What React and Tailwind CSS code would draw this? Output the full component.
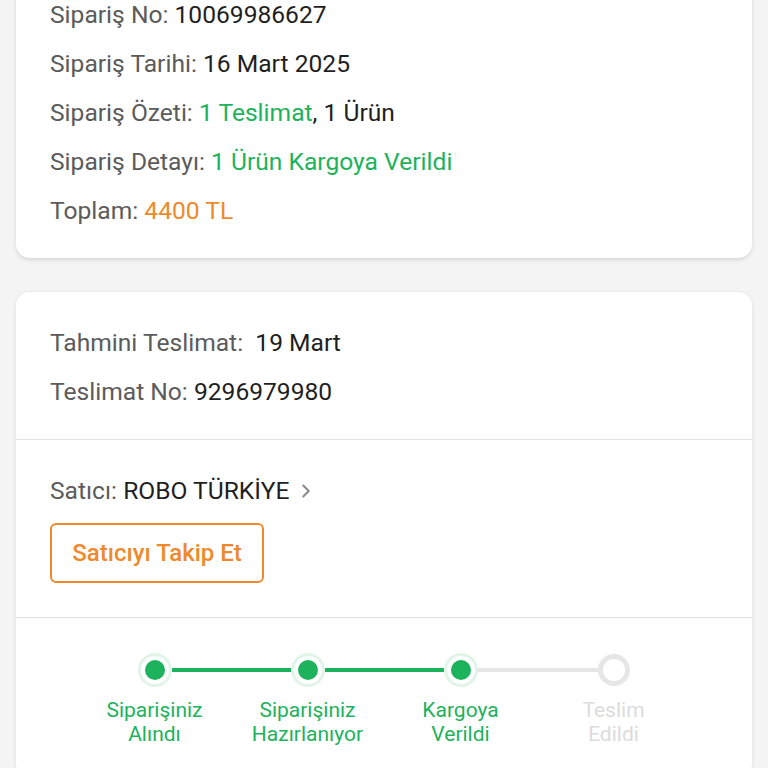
import { ChevronRight } from 'lucide-react'

const adimlar = [
  { ust: 'Siparişiniz', alt: 'Alındı', durum: 'tamam' },
  { ust: 'Siparişiniz', alt: 'Hazırlanıyor', durum: 'tamam' },
  { ust: 'Kargoya', alt: 'Verildi', durum: 'tamam' },
  { ust: 'Teslim', alt: 'Edildi', durum: 'bekliyor' },
]

function Satir({ etiket, children }) {
  return (
    <p className="leading-[49px] text-[24.6px] text-[#5b5b5b] whitespace-nowrap">
      {etiket} {children}
    </p>
  )
}

function Adim({ adim, index }) {
  const tamam = adim.durum === 'tamam'
  const solYesil = index > 0 && adimlar[index - 1].durum === 'tamam' && tamam
  const sagYesil = index < adimlar.length - 1 && adimlar[index + 1].durum === 'tamam'
  return (
    <div className="flex flex-col items-center">
      <div className="flex w-full items-center h-[34px]">
        <div
          className={`flex-1 h-[4px] ${
            index === 0 ? 'bg-transparent' : solYesil ? 'bg-[#1db25c]' : 'bg-[#e6e6e6]'
          }`}
        />
        {tamam ? (
          <div className="w-[34px] h-[34px] rounded-full border-[3px] border-[#e2f4e8] bg-white flex items-center justify-center shrink-0">
            <div className="w-[20px] h-[20px] rounded-full bg-[#1db25c]" />
          </div>
        ) : (
          <div className="w-[32px] h-[32px] rounded-full border-[5px] border-[#e6e6e6] bg-white shrink-0" />
        )}
        <div
          className={`flex-1 h-[4px] ${
            index === adimlar.length - 1 ? 'bg-transparent' : sagYesil ? 'bg-[#1db25c]' : 'bg-[#e6e6e6]'
          }`}
        />
      </div>
      <div
        className={`mt-[11px] text-center text-[21px] leading-[24px] whitespace-nowrap ${
          tamam ? 'text-[#1db25c]' : 'text-[#dcdcdc]'
        }`}
      >
        <div>{adim.ust}</div>
        <div>{adim.alt}</div>
      </div>
    </div>
  )
}

export default function App() {
  return (
    <div
      className="min-h-[768px] h-[768px] overflow-hidden bg-[#f4f4f4] px-4"
      style={{ fontFamily: 'Roboto, "Noto Sans", sans-serif' }}
    >
      <div className="-mt-[40px] pt-[30px] pb-[23px] px-[34px] bg-white rounded-b-[14px] shadow-[0_2px_4px_rgba(0,0,0,0.12)]">
        <Satir etiket="Sipariş No:">
          <span className="text-[#1f1f1f]">10069986627</span>
        </Satir>
        <Satir etiket="Sipariş Tarihi:">
          <span className="text-[#1f1f1f]">16 Mart 2025</span>
        </Satir>
        <Satir etiket="Sipariş Özeti:">
          <span className="text-[#1db25c]">1 Teslimat</span>
          <span className="text-[#1f1f1f]">, 1 Ürün</span>
        </Satir>
        <Satir etiket="Sipariş Detayı:">
          <span className="text-[#1db25c]">1 Ürün Kargoya Verildi</span>
        </Satir>
        <Satir etiket="Toplam:">
          <span className="text-[#ee8a2c]">4400 TL</span>
        </Satir>
      </div>

      <div className="mt-[34px] bg-white rounded-[14px] shadow-[0_1px_4px_rgba(0,0,0,0.1)]">
        <div className="pt-[26px] pb-[23px] px-[34px] border-b border-[#e2e2e2]">
          <Satir etiket="Tahmini Teslimat:">
            <span className="text-[#1f1f1f]">&nbsp;19 Mart</span>
          </Satir>
          <Satir etiket="Teslimat No:">
            <span className="text-[#1f1f1f]">9296979980</span>
          </Satir>
        </div>

        <div className="pt-[26px] pb-[34px] px-[34px] border-b border-[#e2e2e2]">
          <div className="flex items-center leading-[49px] text-[24.6px] text-[#5b5b5b]">
            <span>Satıcı:&nbsp;</span>
            <span className="text-[#1f1f1f]">ROBO TÜRKİYE</span>
            <ChevronRight className="ml-[6px] w-[22px] h-[22px] text-[#8a8a8a]" strokeWidth={2.2} />
          </div>
          <button
            type="button"
            className="mt-[8px] h-[60px] w-[214px] rounded-[6px] border-2 border-[#ee8a2c] text-[24px] font-medium text-[#ee8a2c]"
          >
            Satıcıyı Takip Et
          </button>
        </div>

        <div className="pt-[35px] pb-8">
          <div className="mx-auto w-[612px] grid grid-cols-4">
            {adimlar.map((adim, i) => (
              <Adim key={i} adim={adim} index={i} />
            ))}
          </div>
        </div>
      </div>
    </div>
  )
}
